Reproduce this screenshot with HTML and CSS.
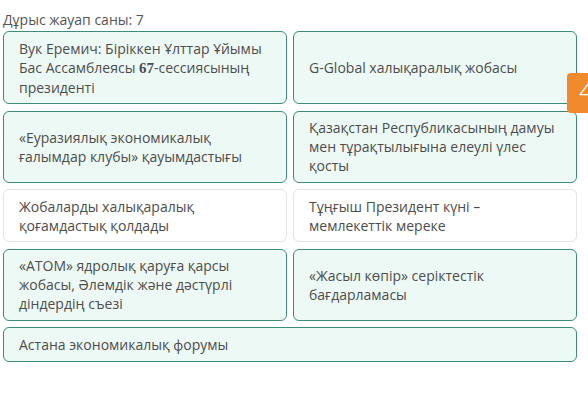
FILE: index.html
```html
<!DOCTYPE html>
<html>
<head>
    <meta charset="utf-8">
    <title>Сәйкестендіру</title>
    <link rel="stylesheet" href="styles.css">
</head>
<body>
<div class="quiz">
    <div class="score">Дұрыс жауап саны: 7</div>

    <div class="answers">
        <div class="card correct"><span>Вук Еремич: Біріккен Ұлттар Ұйымы Бас Ассамблеясы <span class="num">67</span>-сессиясының президенті</span></div>
        <div class="card correct"><span>G-Global халықаралық жобасы</span></div>

        <div class="card correct"><span>«Еуразиялық экономикалық ғалымдар клубы» қауымдастығы</span></div>
        <div class="card correct"><span>Қазақстан Республикасының дамуы мен тұрақтылығына елеулі үлес қосты</span></div>

        <div class="card"><span>Жобаларды халықаралық қоғамдастық қолдады</span></div>
        <div class="card"><span>Тұңғыш Президент күні – мемлекеттік мереке</span></div>

        <div class="card correct"><span>«АТОМ» ядролық қаруға қарсы жобасы, Әлемдік және дәстүрлі діндердің съезі</span></div>
        <div class="card correct"><span>«Жасыл көпір» серіктестік бағдарламасы</span></div>

        <div class="card correct wide"><span>Астана экономикалық форумы</span></div>
    </div>

    <!-- counter badge sticking out on the right -->
    <div class="badge">4</div>
</div>
</body>
</html>
```

FILE: styles.css
```css
html, body {
    margin: 0;
    overflow: hidden;
}

body {
    background-color: #ffffff;
    font-family: "Open Sans", "Noto Sans", sans-serif;
    color: #4d4d4d;
}

.quiz {
    position: relative;
    width: 574px;
    padding: 10px 0 0 3px;
}

.score {
    font-size: 14px;
    line-height: 19px;
    color: #555555;
    margin-bottom: 2px;
}

.answers {
    display: grid;
    grid-template-columns: 1fr 1fr;
    column-gap: 6px;
    row-gap: 6.5px;
}

.card {
    display: flex;
    align-items: center;
    box-sizing: border-box;
    padding: 6.5px 15px;
    font-size: 14px;
    line-height: 19px;
    border: 1px solid #e3e3e3;
    border-radius: 6px;
    background-color: #ffffff;
}

.card.correct {
    border-color: #3d8c7b;
    background-color: #edf9f5;
}

.card.wide {
    grid-column: 1 / 3;
    padding-top: 7px;
    padding-bottom: 7px;
}

.num {
    font-family: "Liberation Serif", "DejaVu Serif", serif;
    font-weight: 700;
    font-size: 15px;
}

.badge {
    position: absolute;
    left: 567px;
    top: 73px;
    width: 30px;
    height: 40px;
    box-sizing: border-box;
    padding-left: 12px;
    background-color: #f08a2c;
    border-radius: 4px 0 0 4px;
    color: #ffffff;
    font-size: 30px;
    line-height: 34px;
    font-weight: 300;
    overflow: hidden;
}
```
